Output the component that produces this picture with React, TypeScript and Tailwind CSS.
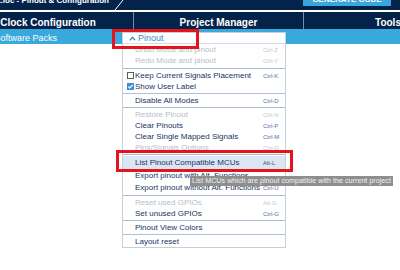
type Row =
  | {
      kind: "item";
      label: string;
      shortcut?: string;
      disabled?: boolean;
      check?: boolean;
      active?: boolean;
      h?: string;
    }
  | { kind: "sep"; m: string };

const rows: Row[] = [
  { kind: "item", label: "Undo Mode and pinout", shortcut: "Ctrl-Z", disabled: true },
  { kind: "item", label: "Redo Mode and pinout", shortcut: "Ctrl-Y", disabled: true },
  { kind: "sep", m: "my-[1.5px]" },
  { kind: "item", label: "Keep Current Signals Placement", shortcut: "Ctrl-K", check: false },
  { kind: "item", label: "Show User Label", check: true },
  { kind: "sep", m: "my-px" },
  { kind: "item", label: "Disable All Modes", shortcut: "Ctrl-D" },
  { kind: "sep", m: "my-px" },
  { kind: "item", label: "Restore Pinout", shortcut: "Ctrl-N", disabled: true },
  { kind: "item", label: "Clear Pinouts", shortcut: "Ctrl-P" },
  { kind: "item", label: "Clear Single Mapped Signals", shortcut: "Ctrl-M" },
  { kind: "item", label: "Pins/Signals Options", shortcut: "Ctrl-O", disabled: true },
  { kind: "sep", m: "my-px" },
  { kind: "item", label: "List Pinout Compatible MCUs", shortcut: "Alt-L", active: true, h: "h-[13px]" },
  { kind: "item", label: "Export pinout with Alt. Functions", h: "h-[13px]" },
  { kind: "item", label: "Export pinout without Alt. Functions", shortcut: "Ctrl-U", h: "h-[12px]" },
  { kind: "sep", m: "my-px" },
  { kind: "item", label: "Reset used GPIOs", shortcut: "Alt-G", disabled: true },
  { kind: "item", label: "Set unused GPIOs", shortcut: "Ctrl-G" },
  { kind: "sep", m: "my-px" },
  { kind: "item", label: "Pinout View Colors" },
  { kind: "sep", m: "my-px" },
  { kind: "item", label: "Layout reset" },
];

function CheckBox({ checked }: { checked: boolean }) {
  if (!checked) {
    return <span className="w-[7px] h-[7px] border border-[#5b5b5b] bg-white shrink-0" />;
  }
  return (
    <span className="w-[7px] h-[7px] bg-[#3b8fd8] shrink-0 flex items-center justify-center">
      <svg width="7" height="7" viewBox="0 0 7 7">
        <polyline points="1.3,3.6 2.8,5 5.7,1.8" fill="none" stroke="white" strokeWidth="1.2" />
      </svg>
    </span>
  );
}

function MenuRow({ row }: { row: Row }) {
  if (row.kind === "sep") {
    return <div className={`h-px bg-[#aebfd8] ${row.m}`} />;
  }
  const textColor = row.disabled ? "text-[#b9bdc5]" : "text-[#22335e]";
  const keyColor = row.disabled
    ? "text-[#c3c7ce]"
    : row.active
    ? "text-[#3c4866]"
    : "text-[#5672a3]";
  return (
    <div
      className={`flex items-center ${row.h ?? "h-[11px]"} ${
        row.active ? "bg-[#dbe6f4]" : ""
      } ${row.check !== undefined ? "pl-[4px]" : "pl-[12px]"}`}
    >
      {row.check !== undefined && <CheckBox checked={row.check} />}
      <span
        className={`${
          row.check !== undefined ? "ml-px w-[128px]" : "w-[128px]"
        } text-[8px] leading-none whitespace-nowrap ${textColor}`}
      >
        {row.label}
      </span>
      {row.shortcut && (
        <span className={`text-[6px] leading-none whitespace-nowrap ${keyColor}`}>
          {row.shortcut}
        </span>
      )}
    </div>
  );
}

export default function App() {
  return (
    <div className="relative w-[400px] h-[270px] overflow-hidden bg-white font-['Liberation_Sans',Arial,sans-serif]">
      {/* breadcrumb bar */}
      <div className="flex h-[10px] bg-[#03234b]">
        <div className="w-[109px] flex justify-end overflow-hidden">
          <span className="text-[8px] font-bold leading-none text-white whitespace-nowrap -mt-[3px]">
            test.ioc - Pinout &amp; Configuration
          </span>
        </div>
        <svg width="16" height="10" viewBox="0 0 16 10" className="shrink-0">
          <line x1="6" y1="10" x2="14" y2="0" stroke="white" strokeWidth="1" />
        </svg>
        <div className="flex-1" />
        <div className="w-[88px] h-[6px] bg-[#3aa7dc] flex justify-center overflow-hidden">
          <span className="text-[8px] font-bold leading-none text-white whitespace-nowrap -mt-[4px]">
            GENERATE CODE
          </span>
        </div>
        <div className="w-[9px]" />
      </div>
      <div className="h-[2px] bg-white" />

      {/* main tabs */}
      <div className="flex h-[17px] bg-[#03234b] overflow-hidden">
        <div className="-ml-[37px] w-[170px] shrink-0 flex items-center justify-center pt-[5px] text-[10px] font-bold leading-none text-white whitespace-nowrap">
          Clock Configuration
        </div>
        <div className="w-px bg-[#7d8ba1] shrink-0" />
        <div className="w-[169px] shrink-0 flex items-center justify-center pt-[5px] text-[10px] font-bold leading-none text-white whitespace-nowrap">
          Project Manager
        </div>
        <div className="w-px bg-[#7d8ba1] shrink-0" />
        <div className="w-[168px] shrink-0 flex items-center justify-center pt-[5px] text-[10px] font-bold leading-none text-white whitespace-nowrap">
          Tools
        </div>
      </div>

      {/* sub bar */}
      <div className="h-[15px] bg-[#39a8dc] flex items-center overflow-hidden">
        <span className="-ml-[5.5px] pt-[3px] text-[9px] leading-none text-white whitespace-nowrap">
          Software Packs
        </span>
      </div>

      {/* Pinout dropdown */}
      <div className="absolute left-[122px] top-[32px] w-[164px] border border-[#c5cfdb] bg-white">
        <div className="h-[11px] flex items-center border-b border-[#d3dbe5] pl-[6px]">
          <svg width="7" height="5" viewBox="0 0 7 5" className="shrink-0">
            <polyline points="0.8,4.3 3.5,1.3 6.2,4.3" fill="none" stroke="#3d8bd4" strokeWidth="1.3" />
          </svg>
          <span className="ml-[2px] pt-px text-[9px] leading-none text-[#3d8bd4]">Pinout</span>
        </div>
        {rows.map((r, i) => (
          <MenuRow key={i} row={r} />
        ))}
      </div>

      {/* annotation boxes */}
      <div className="absolute left-[112px] top-[29px] w-[87px] h-[20px] border-[3px] border-[#e5141c]" />
      <div className="absolute left-[116px] top-[150px] w-[177px] h-[22px] border-[3px] border-[#e5141c]" />

      {/* tooltip */}
      <div className="absolute left-[190px] top-[176px] w-[203px] h-[10px] bg-[#8e8e8e] flex items-center pl-[2px]">
        <span className="text-[7.2px] leading-none text-[#f4f4f4] whitespace-nowrap">
          List MCUs which are pinout compatible with the current project
        </span>
      </div>
    </div>
  );
}
